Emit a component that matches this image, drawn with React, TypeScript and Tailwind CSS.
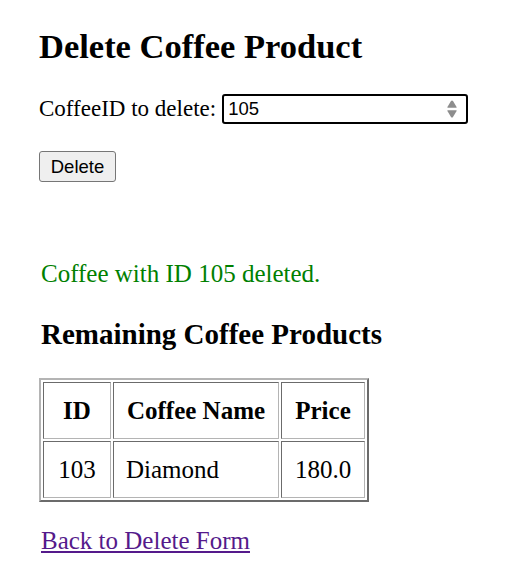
const serif = { fontFamily: '"Liberation Serif", "Times New Roman", serif' };
const sans = { fontFamily: '"Liberation Sans", Arial, sans-serif' };

// inset look of a cell in a border="1" table
const cell =
  "border-[1.5px] border-solid border-t-[#6b6b6b] border-l-[#6b6b6b] border-b-[#b4b4b4] border-r-[#b4b4b4] h-[57px]";

const Spinner = () => (
  <svg width="12" height="22" viewBox="0 0 12 22" className="shrink-0">
    <path d="M6 2.5 Q6.6 2.5 7 3.1 L10.6 9 Q11 9.8 10.1 9.8 H1.9 Q1 9.8 1.4 9 L5 3.1 Q5.4 2.5 6 2.5 Z" fill="#8d8d8d" />
    <path d="M6 19.5 Q6.6 19.5 7 18.9 L10.6 13 Q11 12.2 10.1 12.2 H1.9 Q1 12.2 1.4 13 L5 18.9 Q5.4 19.5 6 19.5 Z" fill="#8d8d8d" />
  </svg>
);

export default function App() {
  return (
    <div className="min-h-[585px] w-[525px] bg-white pl-[39px] pt-[26px] text-black" style={serif}>
      <h1 className="text-[34.5px] font-bold leading-[40px]">Delete Coffee Product</h1>

      <form className="mt-[28px]" onSubmit={(e) => e.preventDefault()}>
        <div className="flex items-center gap-[6px]">
          <label htmlFor="coffeeId" className="text-[23px] leading-[30px]">
            CoffeeID to delete:
          </label>
          <div className="flex h-[30px] w-[246px] items-center rounded-[3px] border-2 border-black pl-[4px] pr-[8px]">
            <input
              id="coffeeId"
              defaultValue="105"
              className="w-full bg-transparent text-[18.5px] outline-none"
              style={sans}
            />
            <Spinner />
          </div>
        </div>

        <button
          type="submit"
          className="mt-[27px] block h-[31px] w-[77px] rounded-[3px] border border-[#767676] bg-[#efefef] text-[18.5px]"
          style={sans}
        >
          Delete
        </button>
      </form>

      <p className="mt-[77px] pl-[2px] text-[25px] leading-[30px] text-[#008000]">Coffee with ID 105 deleted.</p>

      <h2 className="mt-[28px] pl-[2px] text-[29px] font-bold leading-[34px]">Remaining Coffee Products</h2>

      <table className="mt-[27px] border-separate border-spacing-[2px] border-2 border-solid border-t-[#b4b4b4] border-l-[#b4b4b4] border-b-[#6b6b6b] border-r-[#6b6b6b] text-[25px]">
        <thead>
          <tr>
            <th className={`${cell} w-[68px] font-bold`}>ID</th>
            <th className={`${cell} w-[166px] font-bold`}>Coffee Name</th>
            <th className={`${cell} w-[84px] font-bold`}>Price</th>
          </tr>
        </thead>
        <tbody>
          <tr>
            <td className={`${cell} text-center`}>103</td>
            <td className={`${cell} pl-[12px] text-left`}>Diamond</td>
            <td className={`${cell} text-center`}>180.0</td>
          </tr>
        </tbody>
      </table>

      <a href="#" className="mt-[24px] ml-[2px] inline-block text-[25px] leading-[30px] text-[#551a8b] underline">
        Back to Delete Form
      </a>
    </div>
  );
}
